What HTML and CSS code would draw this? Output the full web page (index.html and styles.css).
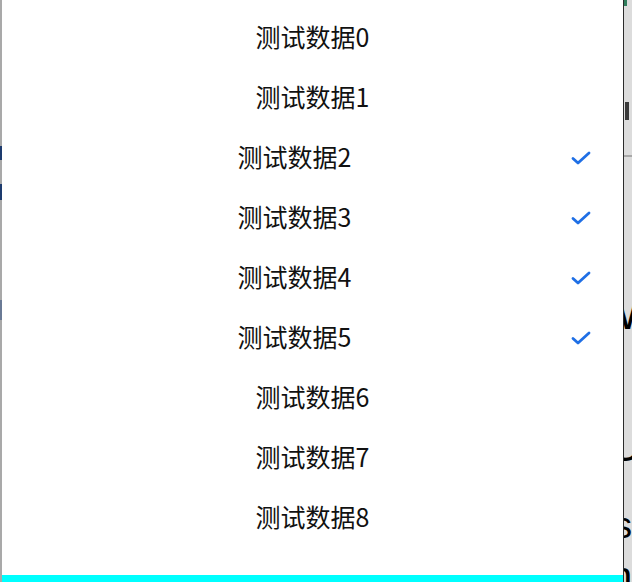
FILE: index.html
```html
<!DOCTYPE html>
<html lang="zh-CN">
<head>
<meta charset="utf-8">
<title>测试数据</title>
<link rel="stylesheet" href="styles.css">
</head>
<body>
<div class="screen">
  <div class="edge-left">
    <span class="frag frag-l1"></span>
    <span class="frag frag-l2"></span>
    <span class="frag frag-l3"></span>
  </div>
  <div class="sheet">
    <ul class="list">
      <li class="row"><span class="label">测试数据0</span><span class="slot"></span></li>
      <li class="row"><span class="label">测试数据1</span><span class="slot"></span></li>
      <li class="row checked"><span class="label">测试数据2</span><span class="slot"><svg class="check" viewBox="0 0 20 14" width="20" height="14"><path d="M2 7.5 L7 12 L18 2" /></svg></span></li>
      <li class="row checked"><span class="label">测试数据3</span><span class="slot"><svg class="check" viewBox="0 0 20 14" width="20" height="14"><path d="M2 7.5 L7 12 L18 2" /></svg></span></li>
      <li class="row checked"><span class="label">测试数据4</span><span class="slot"><svg class="check" viewBox="0 0 20 14" width="20" height="14"><path d="M2 7.5 L7 12 L18 2" /></svg></span></li>
      <li class="row checked"><span class="label">测试数据5</span><span class="slot"><svg class="check" viewBox="0 0 20 14" width="20" height="14"><path d="M2 7.5 L7 12 L18 2" /></svg></span></li>
      <li class="row"><span class="label">测试数据6</span><span class="slot"></span></li>
      <li class="row"><span class="label">测试数据7</span><span class="slot"></span></li>
      <li class="row"><span class="label">测试数据8</span><span class="slot"></span></li>
    </ul>
    <div class="bar"></div>
  </div>
  <div class="edge-right">
    <span class="bg-top"></span>
    <span class="bg-block"></span>
    <span class="bg-line"></span>
    <span class="bg-text t-w">W</span>
    <span class="bg-text t-u">U</span>
    <span class="bg-text t-s">s</span>
    <span class="bg-text t-h">h</span>
  </div>
</div>
</body>
</html>
```

FILE: styles.css
```css
html, body {
  margin: 0;
  padding: 0;
  background: #ffffff;
}

.screen {
  display: flex;
  width: 632px;
  height: 582px;
  overflow: hidden;
  font-family: "Noto Sans CJK SC", "Noto Sans", sans-serif;
}

.edge-left {
  position: relative;
  width: 2px;
  flex: none;
  background: #a9a9a9;
}

.frag {
  position: absolute;
  left: 0;
  width: 2px;
  background: #1d3b6e;
}
.frag-l1 { top: 146px; height: 14px; }
.frag-l2 { top: 184px; height: 16px; }
.frag-l3 { top: 300px; height: 20px; background: #6a7a95; }

.sheet {
  flex: 1;
  display: flex;
  flex-direction: column;
  background: #ffffff;
}

.list {
  list-style: none;
  margin: 0;
  padding: 6px 0 0;
  flex: 1;
}

.row {
  display: flex;
  align-items: center;
  height: 60px;
}

.label {
  flex: 1;
  text-align: center;
  font-size: 25px;
  color: #111111;
  line-height: 60px;
}

.slot {
  display: none;
  width: 36px;
  flex: none;
  padding-top: 4px;
}

.checked .slot {
  display: flex;
  align-items: center;
}

.check {
  margin-left: -16px;
  fill: none;
  stroke: #1f6fe5;
  stroke-width: 2.8;
  stroke-linecap: round;
  stroke-linejoin: round;
}

.bar {
  height: 7px;
  flex: none;
  background: #00ffff;
}

.edge-right {
  position: relative;
  width: 8px;
  flex: none;
  border-left: 1px solid #2a2a2a;
  background: #dcdcdc;
  overflow: hidden;
}

.bg-top {
  position: absolute;
  left: 0;
  top: 0;
  width: 3px;
  height: 6px;
  background: #2f7d5c;
}

.bg-block {
  position: absolute;
  left: 1px;
  top: 102px;
  width: 4px;
  height: 18px;
  background: #3a3a3a;
}

.bg-line {
  position: absolute;
  left: 0;
  top: 155px;
  width: 8px;
  height: 2px;
  background: #a8a8a8;
}

.bg-text {
  position: absolute;
  font-family: "Liberation Sans", sans-serif;
  color: #000000;
  line-height: 1;
}

.t-w { left: -8px; top: 292px; font-size: 44px; }
.t-u { left: -14px; top: 424px; font-size: 44px; }
.t-s { left: -10px; top: 508px; font-size: 36px; }
.t-h { left: -14px; top: 556px; font-size: 40px; }
```
